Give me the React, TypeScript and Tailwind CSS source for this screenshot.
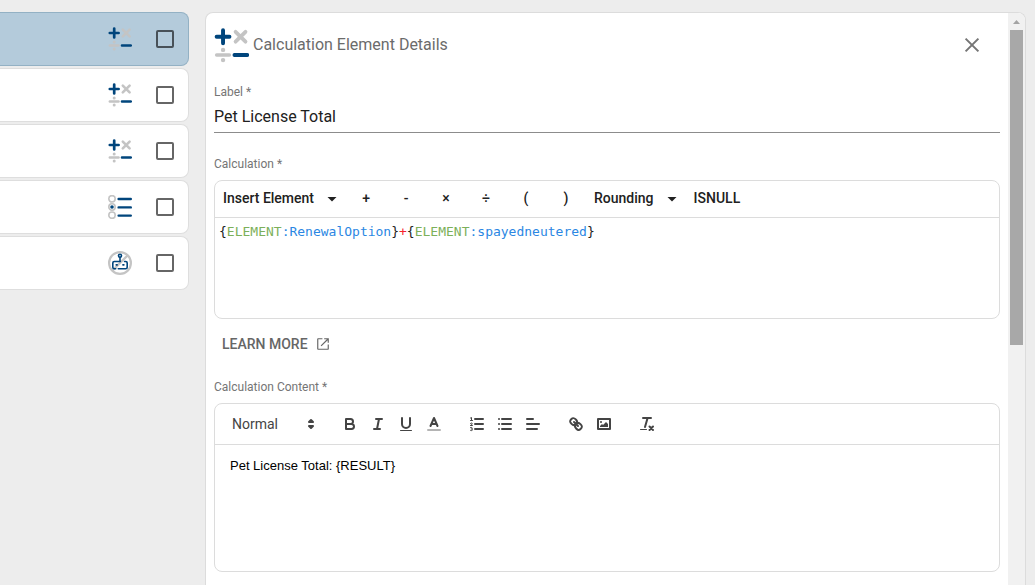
import { useState } from 'react';
import type { ReactNode } from 'react';

type ElementKind = 'calculation' | 'choices' | 'captcha';

type ElementRow = {
  id: number;
  kind: ElementKind;
  name: string;
};

const ROWS: ElementRow[] = [
  { id: 1, kind: 'calculation', name: 'Calculation 1' },
  { id: 2, kind: 'calculation', name: 'Calculation 2' },
  { id: 3, kind: 'calculation', name: 'Calculation 3' },
  { id: 4, kind: 'choices', name: 'Choices' },
  { id: 5, kind: 'captcha', name: 'Captcha' },
];

const OPERATORS = ['+', '-', '×', '÷', '(', ')'];

function CalculationIcon({ className }: { className: string }) {
  return (
    <svg viewBox="0 0 24 24" fill="none" strokeLinecap="round" className={className} aria-hidden="true">
      <path d="M6.2 1.6v8.8M1.8 6h8.8" stroke="#00457c" strokeWidth="2.7" />
      <path d="M14.8 2.6l6.8 6.8M21.6 2.6l-6.8 6.8" stroke="#c4c4c4" strokeWidth="2.6" />
      <path d="M1.8 18.5h8.8" stroke="#c4c4c4" strokeWidth="2.4" />
      <circle cx="6.2" cy="15" r="1.5" fill="#c4c4c4" />
      <circle cx="6.2" cy="22" r="1.5" fill="#c4c4c4" />
      <path d="M14 18.5h8.8" stroke="#00457c" strokeWidth="2.6" />
    </svg>
  );
}

function ChoicesIcon() {
  return (
    <svg viewBox="0 0 24 24" fill="none" className="h-6 w-6" aria-hidden="true">
      <g stroke="#c4c4c4" strokeWidth="1.6">
        <circle cx="4" cy="3.8" r="3.2" />
        <circle cx="4" cy="12" r="3.2" />
        <circle cx="4" cy="20.2" r="3.2" />
      </g>
      <circle cx="4" cy="12" r="1.8" fill="#00457c" />
      <path d="M10.6 4h12.2M10.6 12.4h12.2M10.6 20.6h12.2" stroke="#00457c" strokeWidth="2.4" strokeLinecap="round" />
    </svg>
  );
}

function CaptchaIcon() {
  return (
    <svg viewBox="0 0 24 24" fill="none" className="h-6 w-6" aria-hidden="true">
      <circle cx="12" cy="12" r="10.9" stroke="#c4c4c4" strokeWidth="2.2" />
      <path d="M4.5 19.5l15-15" stroke="#c4c4c4" strokeWidth="2.4" />
      <g stroke="#00457c" strokeWidth="1.6" strokeLinecap="round" strokeLinejoin="round">
        <circle cx="12" cy="4.8" r="1.5" />
        <path d="M12 6.4v3.8" />
        <path d="M12.4 10.5H6.3c-.9 0-1.5.6-1.5 1.5v4.3c0 .9.6 1.5 1.5 1.5h1.4" />
        <path d="M16.6 10.5h1.1c.9 0 1.5.6 1.5 1.5v4.3c0 .9-.6 1.5-1.5 1.5h-7.4" />
        <path d="M8.3 13.8h.8M15 13.8h.8" strokeWidth="1.8" />
      </g>
    </svg>
  );
}

function RowIcon({ kind }: { kind: ElementKind }) {
  if (kind === 'choices') {
    return <ChoicesIcon />;
  }
  if (kind === 'captcha') {
    return <CaptchaIcon />;
  }
  return <CalculationIcon className="h-6 w-6" />;
}

function Caret() {
  return (
    <svg viewBox="0 0 24 24" className="h-6 w-6" fill="currentColor" aria-hidden="true">
      <path d="M7.5 11h9L12 15.5z" />
    </svg>
  );
}

function FormatButton({ label, children }: { label: string; children: ReactNode }) {
  return (
    <button type="button" aria-label={label} className="flex h-6 w-7 cursor-pointer items-center justify-center">
      <svg viewBox="0 0 18 18" fill="none" stroke="#444" strokeWidth="2" strokeLinecap="round" strokeLinejoin="round" className="h-[18px] w-[18px]">
        {children}
      </svg>
    </button>
  );
}

function FormatToolbar() {
  return (
    <div className="flex h-[41px] items-center gap-[15px] border-b border-[#dcdcdc] px-2">
      <div className="relative w-[98px]">
        <select
          aria-label="Text style"
          defaultValue="normal"
          className="h-6 w-full cursor-pointer appearance-none bg-transparent px-[9px] text-sm text-[#444] outline-none"
        >
          <option value="normal">Normal</option>
          <option value="h1">Heading 1</option>
          <option value="h2">Heading 2</option>
        </select>
        <svg viewBox="0 0 18 18" fill="#444" stroke="#444" strokeWidth="2" strokeLinejoin="round" className="pointer-events-none absolute top-[3px] right-px h-[18px] w-[18px]" aria-hidden="true">
          <path d="M7 11l2 2 2-2zM7 7l2-2 2 2z" />
        </svg>
      </div>
      <div className="flex">
        <FormatButton label="Bold">
          <path d="M5 4h4.5a2.5 2.5 0 0 1 0 5H5zM5 9h5.5a2.5 2.5 0 0 1 0 5H5z" />
        </FormatButton>
        <FormatButton label="Italic">
          <path d="M7 4h6M5 14h6M8 14l2-10" />
        </FormatButton>
        <FormatButton label="Underline">
          <path d="M5 3v6a4 4 0 0 0 8 0V3" />
          <rect x="3" y="15" width="12" height="1" rx=".5" fill="#444" stroke="none" />
        </FormatButton>
        <FormatButton label="Text colour">
          <path d="M3 15h12" strokeOpacity=".4" />
          <path d="M5.5 11L9 3l3.5 8M11.6 9H6.4" />
        </FormatButton>
      </div>
      <div className="flex">
        <FormatButton label="Numbered list">
          <path d="M7 4h8M7 9h8M7 14h8" />
          <path d="M2.5 5.5h2M3.5 5.5v-3l-1 .5M2.5 10.5h2c0-1-1.9-1-1.9-2 .2-.9 1.7-.8 1.7.2M2.5 12.6c1.3-.5 2 .1 1.8.8-.1.5-.7.6-1 .6 1 0 1.3.5 1.1 1.1-.2.6-1.2.7-1.9.3" strokeWidth="1" />
        </FormatButton>
        <FormatButton label="Bulleted list">
          <path d="M6 4h9M6 9h9M6 14h9M3 4h.01M3 9h.01M3 14h.01" />
        </FormatButton>
        <FormatButton label="Align">
          <path d="M3 9h12M3 14h10M3 4h6" />
        </FormatButton>
      </div>
      <div className="flex">
        <FormatButton label="Link">
          <path d="M7 7l4 4M8.9 4.577a3.476 3.476 0 0 1 .36 4.679A3.476 3.476 0 0 1 4.577 8.9C3.185 7.5 2.035 6.4 4.217 4.217S7.5 3.185 8.9 4.577zM13.423 9.1a3.476 3.476 0 0 0-4.679-.36 3.476 3.476 0 0 0 .36 4.679c1.392 1.392 2.5 2.542 4.679.36s1.032-3.287-.36-4.679z" />
        </FormatButton>
        <FormatButton label="Image">
          <rect x="3" y="4" width="12" height="10" />
          <circle cx="6" cy="7" r="1" fill="#444" stroke="none" />
          <path d="M5 12v-1l2-2 1 1 3-3 2 2v3z" fill="#444" stroke="none" />
        </FormatButton>
      </div>
      <FormatButton label="Clear formatting">
        <path d="M5 3h8M9.6 3L7 12M11.5 11.5l3.5 3.5M15 11.5l-3.5 3.5" />
        <rect x="2" y="14" width="7" height="1" rx=".5" fill="#444" stroke="none" />
      </FormatButton>
    </div>
  );
}

function ExpressionToolbar() {
  return (
    <div className="flex h-[37px] items-center border-b border-[#dcdcdc] pb-0.5 text-sm font-medium text-[#212121]">
      <button type="button" aria-haspopup="menu" className="flex cursor-pointer items-center gap-1.5 pr-0.5 pl-2">
        Insert Element
        <Caret />
      </button>
      {OPERATORS.map(operator => (
        <button key={operator} type="button" className="w-10 cursor-pointer text-center">
          {operator}
        </button>
      ))}
      <button type="button" aria-haspopup="menu" className="flex cursor-pointer items-center gap-1.5 pr-0.5 pl-2">
        Rounding
        <Caret />
      </button>
      <button type="button" className="cursor-pointer px-2">
        ISNULL
      </button>
    </div>
  );
}

export default function App() {
  const [label, setLabel] = useState('Pet License Total');
  const [checked, setChecked] = useState<number[]>([]);

  const toggle = (id: number) => {
    setChecked(current => (current.includes(id) ? current.filter(item => item !== id) : [...current, id]));
  };

  return (
    <div className="flex h-screen overflow-hidden bg-[#ededed] pt-3 pr-[9px] font-[Roboto,sans-serif]">
      <ul className="flex w-[189px] shrink-0 flex-col gap-0.5">
        {ROWS.map((row, index) => (
          <li
            key={row.id}
            className={`flex h-[54px] items-center justify-end gap-6 rounded-r-lg border border-l-0 pr-3.5 ${
              index === 0 ? 'border-[#93b1c4] bg-[#b4cbdb]' : 'border-[#dedede] bg-white'
            }`}
          >
            <RowIcon kind={row.kind} />
            <input
              type="checkbox"
              aria-label={row.name}
              checked={checked.includes(row.id)}
              onChange={() => toggle(row.id)}
              className="h-[18px] w-[18px] cursor-pointer appearance-none rounded-xs border-2 border-black/60 checked:bg-[#00457c]"
            />
          </li>
        ))}
      </ul>

      <section className="ml-4 flex min-w-0 flex-1 overflow-hidden rounded-t-lg border border-b-0 border-[#dcdcdc] bg-white">
        <div className="min-w-0 flex-1 px-2">
          <header className="flex h-16 items-center">
            <CalculationIcon className="h-[35px] w-[35px]" />
            <h1 className="ml-1 flex-1 text-base text-[#6b6b6b]">Calculation Element Details</h1>
            <button type="button" aria-label="Close" className="mr-4 flex h-6 w-6 cursor-pointer items-center justify-center">
              <svg viewBox="0 0 24 24" stroke="#757575" strokeWidth="2" className="h-6 w-6" aria-hidden="true">
                <path d="M5.6 5.6l12.8 12.8M18.4 5.6L5.6 18.4" />
              </svg>
            </button>
          </header>

          <label htmlFor="element-label" className="mt-[7px] block text-xs text-[#757575]">
            Label *
          </label>
          <input
            id="element-label"
            value={label}
            onChange={event => setLabel(event.target.value)}
            className="block h-[33px] w-full border-b border-[#8c8c8c] bg-transparent text-base text-[#212121] outline-none"
          />

          <p id="calculation-label" className="mt-[23px] text-xs text-[#757575]">
            Calculation *
          </p>
          <div className="mt-2 rounded-lg border border-[#dcdcdc]">
            <ExpressionToolbar />
            <div
              role="textbox"
              aria-labelledby="calculation-label"
              contentEditable
              suppressContentEditableWarning
              spellCheck={false}
              className="h-[100px] px-1 py-1 font-['DejaVu_Sans_Mono',monospace] text-[13px] leading-5 text-[#212121] outline-none"
            >
              {'{'}
              <span className="text-[#7cb05a]">ELEMENT</span>
              <span className="text-[#2b87e3]">:RenewalOption</span>
              {'}'}
              <span className="text-[#f5222d]">+</span>
              {'{'}
              <span className="text-[#7cb05a]">ELEMENT</span>
              <span className="text-[#2b87e3]">:spayedneutered</span>
              {'}'}
            </div>
          </div>

          <div className="flex h-[50px] items-center px-2">
            <a href="#learn-more" className="inline-flex items-center gap-2 text-sm font-medium text-[#666]">
              LEARN MORE
              <svg viewBox="0 0 24 24" fill="currentColor" className="h-3.5 w-3.5" aria-hidden="true">
                <path d="M20 20H4V4h7V2H3.5C2.7 2 2 2.7 2 3.5v17c0 .8.7 1.5 1.5 1.5h17c.8 0 1.5-.7 1.5-1.5V13h-2zM14 2v2h4.6L8 14.6 9.4 16 20 5.4V10h2V2z" />
              </svg>
            </a>
          </div>

          <p id="content-label" className="mt-2.5 text-xs text-[#757575]">
            Calculation Content *
          </p>
          <div className="mt-2 rounded-lg border border-[#dcdcdc]">
            <FormatToolbar />
            <div
              role="textbox"
              aria-labelledby="content-label"
              contentEditable
              suppressContentEditableWarning
              spellCheck={false}
              className="h-[126px] px-[15px] py-3 font-['Liberation_Sans',sans-serif] text-[13px] leading-[18px] text-black outline-none"
            >
              Pet License Total: {'{RESULT}'}
            </div>
          </div>
        </div>

        <div className="flex w-[17px] shrink-0 flex-col items-center bg-[#f1f1f1]" aria-hidden="true">
          <div className="flex h-[17px] w-full shrink-0 items-center justify-center">
            <svg viewBox="0 0 7 4" fill="#a3a3a3" className="h-1 w-[7px]">
              <path d="M3.5 0L7 4H0z" />
            </svg>
          </div>
          <div className="h-[55%] w-[13px] bg-[#a8a8a8]" />
        </div>
      </section>
    </div>
  );
}
